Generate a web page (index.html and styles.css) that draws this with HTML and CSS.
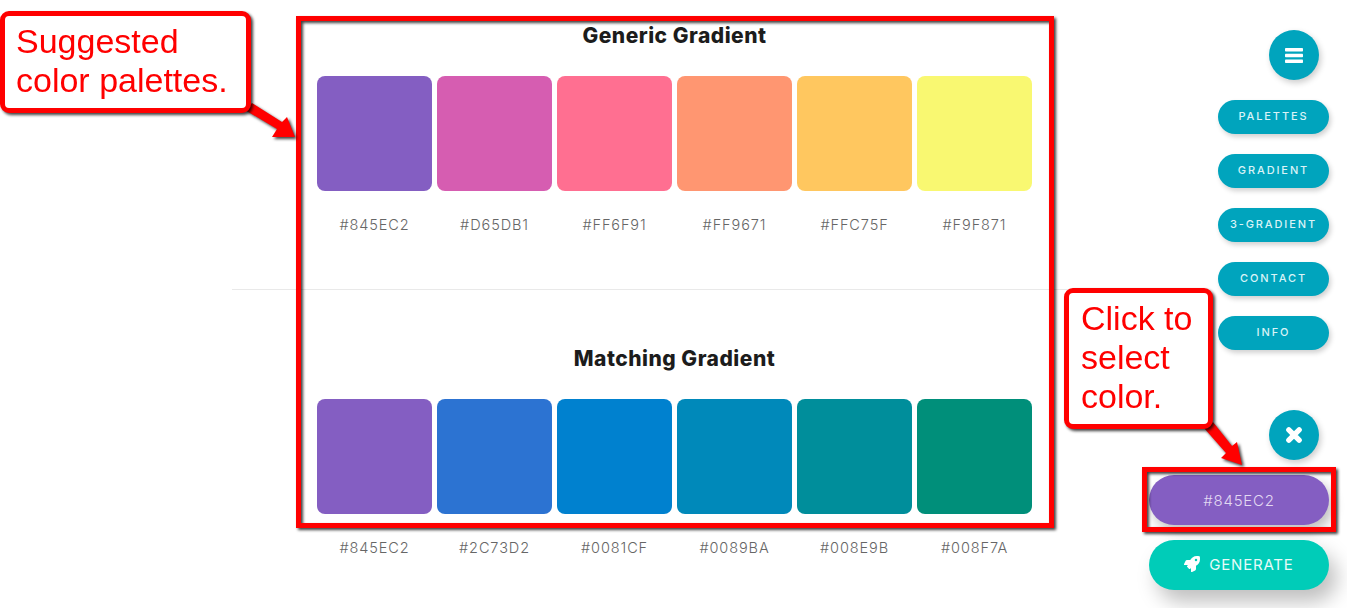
FILE: index.html
```html
<!DOCTYPE html>
<html lang="en">
<head>
<meta charset="utf-8">
<title>Color palettes</title>
<link rel="stylesheet" href="styles.css">
</head>
<body>
<div class="page">
  <main class="main">
    <section class="group">
      <h2 class="title">Generic Gradient</h2>
      <div class="row">
        <div class="cell"><div class="swatch s1"></div><p class="hex">#845EC2</p></div>
        <div class="cell"><div class="swatch s2"></div><p class="hex">#D65DB1</p></div>
        <div class="cell"><div class="swatch s3"></div><p class="hex">#FF6F91</p></div>
        <div class="cell"><div class="swatch s4"></div><p class="hex">#FF9671</p></div>
        <div class="cell"><div class="swatch s5"></div><p class="hex">#FFC75F</p></div>
        <div class="cell"><div class="swatch s6"></div><p class="hex">#F9F871</p></div>
      </div>
    </section>
    <section class="group second">
      <h2 class="title">Matching Gradient</h2>
      <div class="row">
        <div class="cell"><div class="swatch s1"></div><p class="hex">#845EC2</p></div>
        <div class="cell"><div class="swatch m2"></div><p class="hex">#2C73D2</p></div>
        <div class="cell"><div class="swatch m3"></div><p class="hex">#0081CF</p></div>
        <div class="cell"><div class="swatch m4"></div><p class="hex">#0089BA</p></div>
        <div class="cell"><div class="swatch m5"></div><p class="hex">#008E9B</p></div>
        <div class="cell"><div class="swatch m6"></div><p class="hex">#008F7A</p></div>
      </div>
    </section>
  </main>
  <aside class="rail">
    <button class="round top" aria-label="Menu">
      <svg class="ico" viewBox="0 0 18 15"><rect width="18" height="3.6" rx=".8"/><rect y="5.7" width="18" height="3.6" rx=".8"/><rect y="11.4" width="18" height="3.6" rx=".8"/></svg>
    </button>
    <nav class="nav">
      <a class="pill">PALETTES</a>
      <a class="pill">GRADIENT</a>
      <a class="pill">3-GRADIENT</a>
      <a class="pill">CONTACT</a>
      <a class="pill">INFO</a>
    </nav>
    <button class="round close" aria-label="Close">
      <svg class="ico" viewBox="0 0 14 14"><path d="M3 3 L11 11 M11 3 L3 11" stroke="#fff" stroke-width="4.2" stroke-linecap="round" fill="none"/></svg>
    </button>
    <button class="wide picked">#845EC2</button>
    <button class="wide generate">
      <svg class="rocket" viewBox="0 0 512 512"><path d="M505.05 19.1a15.89 15.89 0 0 0-12.2-12.2C460.65 0 435.46 0 410.36 0c-103.2 0-165.1 55.2-211.29 128H94.87A48 48 0 0 0 52 154.49l-49.42 98.8A24 24 0 0 0 24.07 288h103.77l-22.47 22.47a32 32 0 0 0 0 45.25l50.9 50.91a32 32 0 0 0 45.26 0L224 384.16V488a24 24 0 0 0 34.7 21.49l98.7-49.39a47.91 47.91 0 0 0 26.5-42.9V312.79c72.59-46.3 128-108.4 128-211.09.1-25.2.1-50.4-6.85-82.6zM384 168a40 40 0 1 1 40-40 40 40 0 0 1-40 40z"/></svg>
      GENERATE
    </button>
  </aside>
</div>

<div class="frame frame-main"></div>
<div class="frame frame-pick"></div>
<svg class="arrow arrow-a" viewBox="0 0 52 35"><polygon points="0,7 7,0 37,19 42,14 50,34 27,34 32,26"/></svg>
<svg class="arrow arrow-b" viewBox="0 0 40 46"><polygon points="0,8 9,2 28,26 33,22 38,45 17,38 22,33"/></svg>
<div class="note note-a">Suggested<br>color palettes.</div>
<div class="note note-b">Click to<br>select<br>color.</div>
</body>
</html>
```
FILE: styles.css
```css
* { box-sizing: border-box; }
html, body { margin: 0; height: 100%; background: #fff; overflow: hidden; }
body { font-family: "Inter", "Noto Sans", sans-serif; position: relative; }

.page { display: flex; height: 608px; }

.main { width: 885px; margin-left: 232px; flex: none; }
.group { height: 290px; padding-top: 24px; border-bottom: 1px solid #e9e9e9; }
.second { padding-top: 57px; height: auto; border-bottom: 0; }
.title {
  margin: 0 0 28px;
  font-size: 21px;
  line-height: 24px;
  font-weight: 800;
  letter-spacing: .5px;
  color: #1c1c1c;
  text-align: center;
}
.row { display: flex; gap: 5px; justify-content: center; }
.cell { width: 115px; }
.swatch { height: 115px; border-radius: 8px; }
.hex {
  margin: 24px 0 0;
  font-size: 14.5px;
  line-height: 20px;
  letter-spacing: .9px;
  font-weight: 300;
  color: #666;
  text-align: center;
}
.s1 { background: #845ec2; }
.s2 { background: #d65db1; }
.s3 { background: #ff6f91; }
.s4 { background: #ff9671; }
.s5 { background: #ffc75f; }
.s6 { background: #f9f871; }
.m2 { background: #2c73d2; }
.m3 { background: #0081cf; }
.m4 { background: #0089ba; }
.m5 { background: #008e9b; }
.m6 { background: #008f7a; }

.rail {
  flex: 1;
  padding: 30px 18px 0 0;
  display: flex;
  flex-direction: column;
  align-items: flex-end;
}
button { border: 0; padding: 0; font-family: inherit; }
.round {
  width: 50px;
  height: 50px;
  border-radius: 50%;
  background: #00a4bd;
  box-shadow: 2px 3px 6px rgba(0,0,0,.2);
  display: flex;
  align-items: center;
  justify-content: center;
  margin-right: 10px;
}
.ico { width: 18px; height: 15px; fill: #fff; }
.close .ico { width: 18px; height: 18px; }
.nav { display: flex; flex-direction: column; gap: 20px; margin-top: 20px; }
.pill {
  width: 111px;
  height: 34px;
  padding-bottom: 2px;
  border-radius: 17px;
  background: #00a4bd;
  color: #d9f3f7;
  font-size: 11px;
  font-weight: 500;
  letter-spacing: 1.9px;
  display: flex;
  align-items: center;
  justify-content: center;
  box-shadow: 2px 3px 5px rgba(0,0,0,.18);
}
.close { margin-top: 60px; }
.wide {
  width: 180px;
  height: 50px;
  border-radius: 25px;
  font-size: 15px;
  letter-spacing: .8px;
  display: flex;
  align-items: center;
  justify-content: center;
}
.picked {
  margin-top: 15px;
  background: #845ec2;
  color: #e2d9f2;
  font-weight: 300;
  box-shadow: 4px 6px 12px rgba(0,0,0,.25);
}
.generate {
  margin-top: 15px;
  padding-bottom: 2px;
  background: #00ccb8;
  color: #e6fbf8;
  font-weight: 400;
  gap: 9px;
  box-shadow: 8px 12px 20px rgba(0,0,0,.25);
}
.rocket { width: 16px; height: 16px; fill: #fff; }

/* annotation overlay */
.frame, .note, .arrow { position: absolute; filter: drop-shadow(2px 2px 1.5px rgba(0,0,0,.75)); }
.frame { border: 5px solid #f00; }
.frame-main { left: 296px; top: 16px; width: 758px; height: 512px; }
.frame-pick { left: 1142px; top: 467px; width: 194px; height: 65px; }
.note {
  background: #fff;
  border: 5px solid #f00;
  border-radius: 9px;
  color: #f00;
  font-family: "Liberation Sans", Arial, sans-serif;
  font-size: 34px;
  line-height: 39px;
}
.note-a { left: 0; top: 11px; width: 251px; height: 102px; padding: 6px 0 0 11px; }
.note-b { left: 1064px; top: 288px; width: 149px; height: 141px; padding: 6px 0 0 12px; }
.arrow { fill: #f00; }
.arrow-a { left: 245px; top: 103px; width: 52px; height: 35px; }
.arrow-b { left: 1204px; top: 420px; width: 40px; height: 46px; }
```
